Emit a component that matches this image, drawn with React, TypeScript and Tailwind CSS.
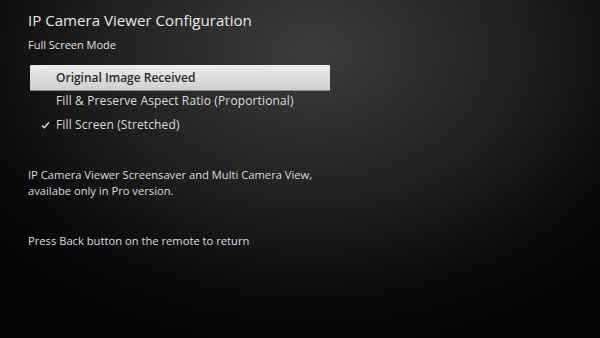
const font = { fontFamily: '"Open Sans", "Liberation Sans", sans-serif' };

type Option = {
  label: string;
  selected?: boolean;
  checked?: boolean;
};

const options: Option[] = [
  { label: 'Original Image Received', selected: true },
  { label: 'Fill & Preserve Aspect Ratio (Proportional)' },
  { label: 'Fill Screen (Stretched)', checked: true },
];

function CheckMark() {
  return (
    <svg width="9" height="8" viewBox="0 0 9 8" className="shrink-0">
      <path d="M1 4.4 L3.4 6.8 L8 1.2" fill="none" stroke="#e0e0e0" strokeWidth="1.4" />
    </svg>
  );
}

export default function App() {
  return (
    <div
      className="h-[338px] w-[600px] overflow-hidden bg-[radial-gradient(ellipse_70%_90%_at_52%_15%,#3d3d3d_0%,#232323_45%,#0b0b0c_80%,#050505_100%)] text-[#e6e6e6]"
      style={font}
    >
      <div className="flex flex-col pl-[28px] pt-[9px]">
        <h1 className="text-[15.1px] leading-[22px] text-[#e8e8e8]">IP Camera Viewer Configuration</h1>
        <p className="mt-[6px] text-[11px] leading-[16px] text-[#e0e0e0]">Full Screen Mode</p>

        <ul className="mt-[12px] flex w-[302px] flex-col pl-[2px]">
          {options.map((o) => (
            <li
              key={o.label}
              className={
                o.selected
                  ? 'flex h-[26px] items-center rounded-[1px] border-b border-[#8a8a8a] bg-gradient-to-b from-[#ececec] to-[#cfcfcf] pl-[26px] text-[12px] font-semibold text-[#2a2a2a]'
                  : 'flex h-[24px] items-center pb-[4px] text-[12px] tracking-[0.13px] text-[#dcdcdc]'
              }
            >
              {!o.selected && (
                <span className="flex w-[26px] justify-center pl-[4px]">{o.checked && <CheckMark />}</span>
              )}
              {o.label}
            </li>
          ))}
        </ul>

        <div className="mt-[28px] text-[11.2px] leading-[16px] text-[#dcdcdc]">
          <p>IP Camera Viewer Screensaver and Multi Camera View,</p>
          <p>availabe only in Pro version.</p>
        </div>

        <p className="mt-[34px] text-[11.2px] leading-[16px] text-[#dcdcdc]">
          Press Back button on the remote to return
        </p>
      </div>
    </div>
  );
}
